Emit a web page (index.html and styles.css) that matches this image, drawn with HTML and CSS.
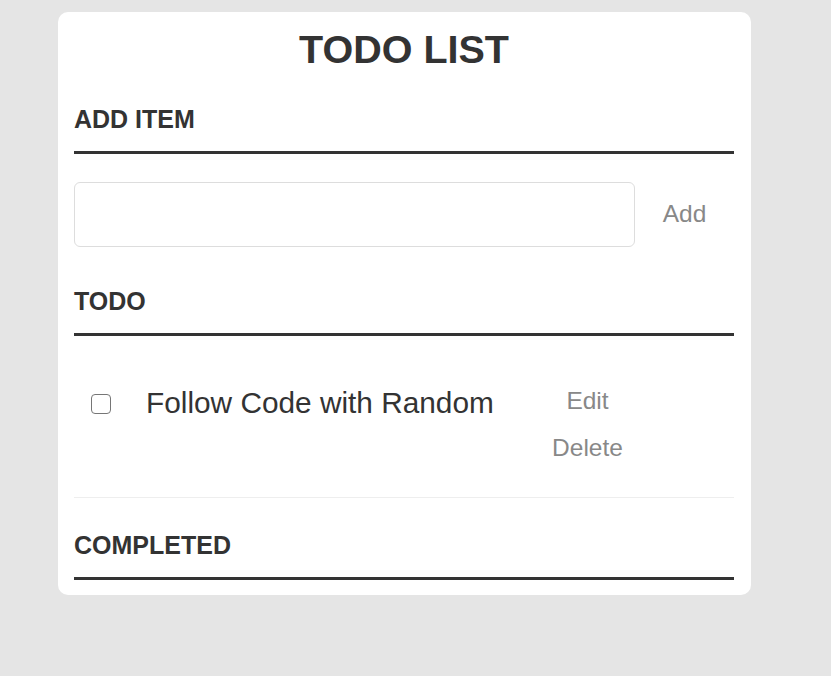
FILE: index.html
```html
<!DOCTYPE html>
<html lang="en">
<head>
<meta charset="utf-8">
<title>Todo List</title>
<link rel="stylesheet" href="styles.css">
</head>
<body>
<div class="card">
  <h1 class="title">TODO LIST</h1>
  <h3 class="section section-add">Add Item</h3>
  <div class="add-row">
    <input class="add-input" type="text">
    <button class="btn add-btn">Add</button>
  </div>
  <h3 class="section section-todo">Todo</h3>
  <ul class="tasks">
    <li class="task">
      <input class="check" type="checkbox">
      <label class="task-label">Follow Code with Random</label>
      <div class="actions">
        <button class="btn action">Edit</button>
        <button class="btn action">Delete</button>
      </div>
    </li>
  </ul>
  <h3 class="section section-completed">Completed</h3>
  <ul class="tasks completed"></ul>
</div>
</body>
</html>
```

FILE: styles.css
```css
html, body {
  margin: 0;
  padding: 0;
}
body {
  background: #e5e5e5;
  font-family: "Liberation Sans", Arial, sans-serif;
  color: #333;
}
.card {
  box-sizing: border-box;
  width: 693px;
  margin: 12px 0 0 58px;
  padding: 15px 17px 15px 16px;
  background: #fff;
  border-radius: 10px;
}
.title {
  margin: 0;
  font-size: 39.5px;
  font-weight: 700;
  line-height: normal;
  text-align: center;
  color: #333;
}
.section {
  margin: 0;
  padding: 0 0 17px;
  font-size: 25px;
  font-weight: 700;
  line-height: normal;
  text-transform: uppercase;
  color: #333;
  border-bottom: 3px solid #333;
}
.section-add {
  margin-top: 32.5px;
}
.section-todo {
  margin-top: 40px;
}
.section-completed {
  margin-top: 33px;
}
.add-row {
  display: flex;
  align-items: center;
  margin-top: 28.3px;
}
.add-input {
  box-sizing: border-box;
  width: 85%;
  height: 65px;
  margin: 0;
  border: 1px solid #ddd;
  border-radius: 6px;
  background: #fff;
  font-family: inherit;
  font-size: 18px;
  outline: none;
}
.btn {
  background: none;
  border: 0;
  color: #888;
  font-family: "Liberation Sans", Arial, sans-serif;
  font-size: 24.5px;
  line-height: normal;
  padding: 1px 6px;
  cursor: pointer;
}
.add-btn {
  width: 15%;
  text-align: center;
}
.tasks {
  list-style: none;
  margin: 0;
  padding: 0;
}
.task {
  display: flex;
  align-items: flex-start;
  padding: 50px 0 34px;
  border-bottom: 1px solid #eee;
}
.check {
  appearance: none;
  -webkit-appearance: none;
  box-sizing: border-box;
  width: 20px;
  height: 20px;
  margin: 8px 0 0 17px;
  border: 1.5px solid #767676;
  border-radius: 4px;
  background: #fff;
  flex: 0 0 auto;
}
.task-label {
  flex: 0 0 400px;
  margin-left: 35px;
  font-size: 29.8px;
  line-height: normal;
  color: #333;
}
.actions {
  display: flex;
  flex-direction: column;
  align-items: center;
  gap: 17.5px;
  width: 83px;
}
```
